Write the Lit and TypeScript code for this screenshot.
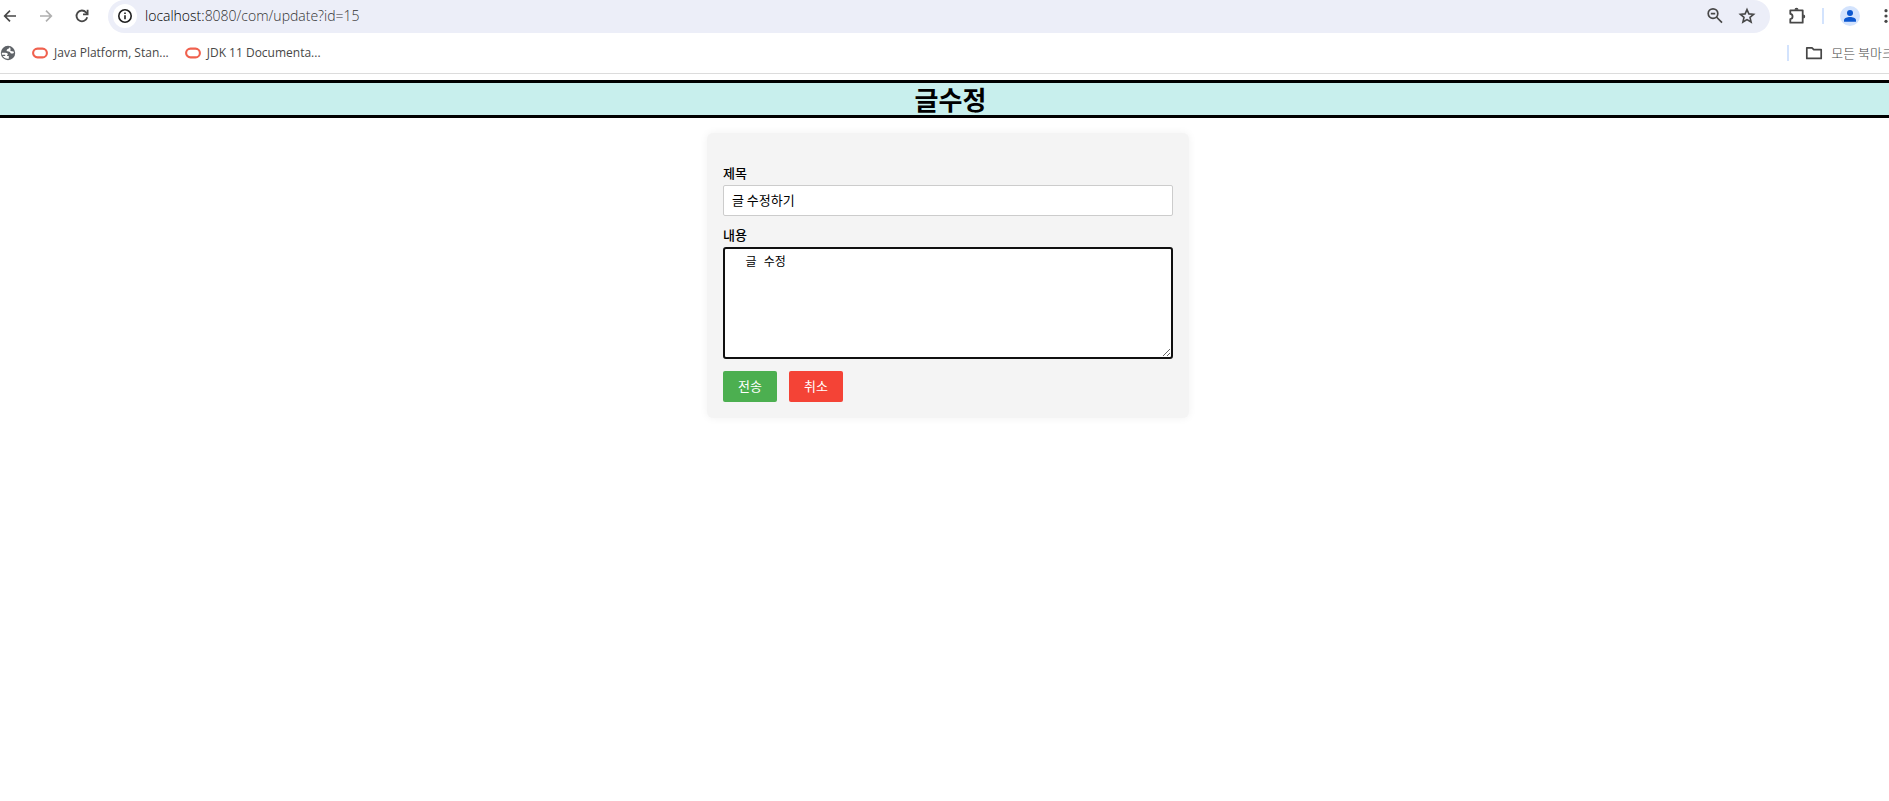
import { LitElement, html, css } from "lit";
import { customElement, state } from "lit/decorators.js";

const oracleMark = html`<svg width="16" height="16" viewBox="0 0 16 16" aria-hidden="true">
  <rect x="1.1" y="3.6" width="13.8" height="8.8" rx="4.4" fill="none" stroke="#f0614e" stroke-width="2.1" />
</svg>`;

@customElement("browser-bar")
export class BrowserBar extends LitElement {
  static styles = css`
    :host {
      display: block;
      background: #fff;
      color: #474747;
      font-family: "Open Sans", "Noto Sans CJK KR", sans-serif;
      border-bottom: 1px solid #dcdcdc;
    }
    svg {
      display: block;
      flex: none;
    }
    button {
      border: 0;
      padding: 0;
      background: none;
      color: inherit;
      display: flex;
      align-items: center;
      justify-content: center;
      flex: none;
      cursor: pointer;
    }
    .toolbar {
      display: flex;
      align-items: center;
      height: 33px;
    }
    .nav {
      display: flex;
      gap: 16px;
      padding: 0 16px 2px 0;
    }
    .nav button {
      width: 20px;
    }
    .nav .forward {
      color: #b0b0b0;
    }
    .address {
      flex: 1;
      display: flex;
      align-items: center;
      align-self: stretch;
      background: #eceef8;
      border-radius: 17px;
      padding: 0 14px 2px 5px;
    }
    .info {
      width: 24px;
      height: 24px;
      border-radius: 50%;
      background: #fff;
      color: #1f1f1f;
    }
    .url {
      flex: 1;
      margin-left: 8px;
      font-size: 14px;
      line-height: 20px;
      font-weight: 300;
      color: #333;
    }
    .host {
      color: #000;
    }
    .address .zoom {
      margin-right: 14px;
    }
    .tools {
      display: flex;
      align-items: center;
      padding: 0 0 2px 17px;
    }
    .divider {
      width: 2px;
      height: 16px;
      background: #d3e3fd;
    }
    .tools .divider {
      margin: 0 16px 0 15px;
    }
    .avatar {
      width: 20px;
      height: 20px;
      border-radius: 50%;
      background: #d3e3fd;
      color: #0b57d0;
      margin-right: 16px;
    }
    .bookmarks {
      display: flex;
      align-items: center;
      height: 40px;
      font-size: 12px;
      line-height: 16px;
    }
    .bookmarks a {
      display: flex;
      align-items: center;
      gap: 6px;
      color: #474747;
      text-decoration: none;
      white-space: nowrap;
      margin-right: 16px;
    }
    .all {
      margin-left: auto;
      padding-right: 2px;
      display: flex;
      align-items: center;
      gap: 16px;
    }
    .all button {
      font-family: "Noto Sans CJK KR", sans-serif;
      font-size: 13px;
      font-weight: 300;
      line-height: 16px;
      gap: 8px;
      white-space: nowrap;
    }
  `;

  render() {
    return html`
      <div class="toolbar">
        <div class="nav">
          <button aria-label="Back">
            <svg width="20" height="20" viewBox="0 0 20 20" fill="none" stroke="currentColor" stroke-width="1.7">
              <path d="M16 10H5M10 4.7 4.7 10l5.3 5.3" />
            </svg>
          </button>
          <button class="forward" aria-label="Forward">
            <svg width="20" height="20" viewBox="0 0 20 20" fill="none" stroke="currentColor" stroke-width="1.7">
              <path d="M4 10h11M10 4.7l5.3 5.3-5.3 5.3" />
            </svg>
          </button>
          <button aria-label="Reload">
            <svg width="20" height="20" viewBox="0 0 20 20" fill="none" stroke="currentColor" stroke-width="1.8">
              <path d="M15.2 11.2A5.4 5.4 0 1 1 14 6.3l1.2 1.3" />
              <path d="M15.6 3.8v4.6H11" />
            </svg>
          </button>
        </div>
        <div class="address">
          <button class="info" aria-label="Site information">
            <svg width="16" height="16" viewBox="0 0 16 16" fill="none" stroke="currentColor" stroke-width="1.6">
              <circle cx="8" cy="8" r="6.2" />
              <path d="M8 7.2v4M8 4.4v1.7" />
            </svg>
          </button>
          <span class="url"><span class="host">localhost:</span>8080/com/update?id=15</span>
          <button class="zoom" aria-label="Zoom">
            <svg width="18" height="18" viewBox="0 0 18 18" fill="none" stroke="currentColor" stroke-width="1.7">
              <circle cx="7" cy="6.6" r="4.8" />
              <path d="M10.4 10l5.6 5.6M4.8 6.6h4.4" />
            </svg>
          </button>
          <button aria-label="Bookmark">
            <svg width="18" height="18" viewBox="0 0 18 18" fill="none" stroke="currentColor" stroke-width="1.6">
              <path d="M9 2.6l1.9 4.3 4.7.4-3.6 3.1 1.1 4.6L9 12.6 4.9 15 6 10.4 2.4 7.3l4.7-.4z" />
            </svg>
          </button>
        </div>
        <div class="tools">
          <button aria-label="Extensions">
            <svg width="20" height="20" viewBox="0 0 20 20">
              <path
                d="M3.3 4.3h12.4v12.4H3.3v-3.6c3-.4 3-4.800 0-5.200z"
                fill="none"
                stroke="currentColor"
                stroke-width="1.8"
                stroke-linejoin="round"
              />
              <path d="M7.5 3.800a2 2 0 0 1 4 0zM16.200 8.500a2 2 0 0 1 0 4z" fill="currentColor" />
            </svg>
          </button>
          <span class="divider"></span>
          <button class="avatar" aria-label="Profile">
            <svg width="20" height="20" viewBox="0 0 20 20" fill="currentColor">
              <circle cx="10" cy="7" r="3" />
              <path d="M4 15.7v-1.4c0-2.2 3.3-3.3 6-3.3s6 1.1 6 3.3v1.4z" />
            </svg>
          </button>
          <button aria-label="Menu">
            <svg width="20" height="20" viewBox="0 0 20 20" fill="currentColor">
              <circle cx="10" cy="4.7" r="1.6" />
              <circle cx="10" cy="10" r="1.6" />
              <circle cx="10" cy="15.3" r="1.6" />
            </svg>
          </button>
        </div>
      </div>
      <nav class="bookmarks" aria-label="Bookmarks">
        <a href="#" aria-label="Web">
          <svg width="16" height="16" viewBox="0 0 16 16">
            <circle cx="8" cy="8" r="7.2" fill="#5f6368" />
            <path
              d="M9.8 1.8C9.8 4 6.8 3.600 6.600 5.600c0 1.400 1.700.9 2.900 1.100 1.200.3.600 1.700 1.800 1.900.9.100 1.700-.3 2.600-.6L13.600 6.500l-3.200-.6.2-2z"
              fill="#fff"
            />
            <path
              d="M1.800 7.800h3.600c1.600 0 2.600.8 2.600 2h-.9v1.300h1.700v2.700c-2.800.4-5-.9-6.200-2.700h2.600V9.800H1.900z"
              fill="#fff"
            />
          </svg>
        </a>
        <a href="#">${oracleMark}<span>Java Platform, Stan...</span></a>
        <a href="#">${oracleMark}<span>JDK 11 Documenta...</span></a>
        <div class="all">
          <span class="divider"></span>
          <button>
            <svg width="18" height="16" viewBox="0 0 18 16" fill="none" stroke="currentColor" stroke-width="1.7">
              <path d="M1.8 2.8h5.2l1.8 1.9h7.4v8.7H1.8z" stroke-linejoin="round" />
            </svg>
            <span>모든 북마크</span>
          </button>
        </div>
      </nav>
    `;
  }
}

@customElement("edit-form")
export class EditForm extends LitElement {
  static styles = css`
    :host {
      display: block;
      font-family: "Noto Sans CJK KR", sans-serif;
      color: #000;
    }
    .card {
      box-sizing: border-box;
      max-width: 482px;
      margin: 15px auto;
      padding: 31px 16px 16px;
      background: #f4f4f4;
      border-radius: 6px;
      box-shadow: 0 0 8px rgba(0, 0, 0, 0.06);
    }
    label {
      display: block;
      margin-bottom: 3px;
      font-size: 13px;
      line-height: 18px;
      font-weight: 500;
    }
    input,
    textarea {
      display: block;
      box-sizing: border-box;
      width: 100%;
      margin: 0 0 10px;
      padding: 0 8px;
      background: #fff;
      color: #000;
      font-size: 13px;
    }
    input {
      height: 31px;
      padding-bottom: 2px;
      border: 1px solid #ccc;
      border-radius: 2px;
      font-family: inherit;
    }
    textarea {
      height: 112px;
      margin-bottom: 12px;
      padding: 5px 6px;
      border: 2px solid #101010;
      border-radius: 3px;
      outline: none;
      font-family: "Liberation Mono", "Noto Sans CJK KR", monospace;
      font-size: 12px;
      line-height: 18px;
      resize: vertical;
    }
    .actions {
      display: flex;
      gap: 12px;
    }
    .actions button {
      height: 31px;
      padding: 0 15px 2px;
      border: 0;
      border-radius: 2px;
      color: #fff;
      font-family: inherit;
      font-size: 13px;
      cursor: pointer;
    }
    .send {
      background: #4caf50;
    }
    .cancel {
      background: #f44336;
    }
  `;

  @state() private subject = "글 수정하기";
  @state() private content = "  글 수정";

  render() {
    return html`
      <form class="card" @submit=${(e: Event) => e.preventDefault()}>
        <label for="subject">제목</label>
        <input id="subject" type="text" .value=${this.subject} />
        <label for="content">내용</label>
        <textarea id="content" spellcheck="false" .value=${this.content}></textarea>
        <div class="actions">
          <button class="send" type="submit">전송</button>
          <button class="cancel" type="button">취소</button>
        </div>
      </form>
    `;
  }
}

@customElement("app-root")
export class AppRoot extends LitElement {
  static styles = css`
    :host {
      display: block;
      overflow: hidden;
      min-height: 100vh;
      background: #fff;
    }
    .window {
      margin-right: -7px;
    }
    .title {
      margin: 6px 0 0;
      padding-left: 5px;
      border: solid #000;
      border-width: 3px 0;
      background: #c8efed;
      color: #000;
      text-align: center;
      font-family: "Noto Sans CJK KR", sans-serif;
      font-size: 26px;
      line-height: 32px;
      font-weight: 700;
    }
  `;

  render() {
    return html`
      <div class="window">
        <browser-bar></browser-bar>
        <main>
          <h1 class="title">글수정</h1>
          <edit-form></edit-form>
        </main>
      </div>
    `;
  }
}
